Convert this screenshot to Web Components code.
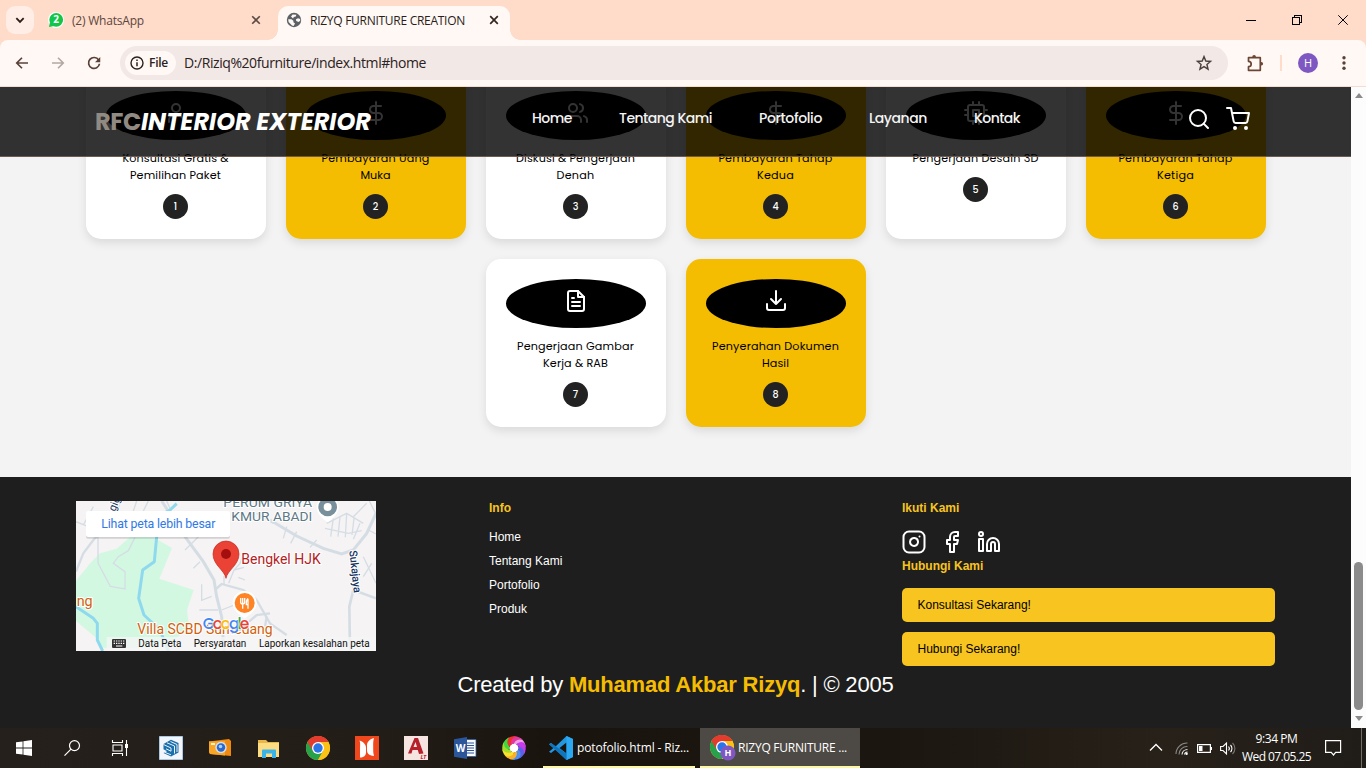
<!DOCTYPE html>
<html lang="id">
<head>
<meta charset="utf-8">
<title>RIZYQ FURNITURE CREATION</title>
<style>
html,body{margin:0;height:100%;overflow:hidden;background:#1e1e1e}
</style>
</head>
<body>
<desktop-screen></desktop-screen>
<script>
const fitted = [];

function component(name, html) {
  const tpl = document.createElement('template');
  tpl.innerHTML = html;
  customElements.define(name, class extends HTMLElement {
    constructor() {
      super();
      this.attachShadow({ mode: 'open' }).appendChild(tpl.content.cloneNode(true));
    }
  });
}

/* Text run whose tracking is tuned so that it takes a given width. */
customElements.define('fit-text', class extends HTMLElement {
  constructor() {
    super();
    this.attachShadow({ mode: 'open' }).innerHTML =
      '<style>:host{display:block;white-space:nowrap}span{display:inline-block;white-space:nowrap}</style><span><slot></slot></span>';
  }
  connectedCallback() { fitted.push(this); }
  fit() {
    const w = parseFloat(this.getAttribute('w'));
    const span = this.shadowRoot.querySelector('span');
    this.style.width = w + 'px';
    const n = this.textContent.length;
    span.style.letterSpacing = ((w - span.getBoundingClientRect().width) / n).toFixed(3) + 'px';
  }
});

const S = (body, extra = '') => `<svg viewBox="0 0 24 24" fill="none" stroke="currentColor" stroke-width="2" stroke-linecap="round" stroke-linejoin="round" ${extra}>${body}</svg>`;
const F = (body, box = '0 0 24 24') => `<svg viewBox="${box}" fill="none">${body}</svg>`;
const chrome = `<circle cx="12" cy="12" r="12" fill="#fbc116"/><path d="M12 12 1.6 6A12 12 0 0 1 22.4 6Z" fill="#e33b2e"/><path d="M12 12 1.6 6A12 12 0 0 0 12 24L17.2 15Z" fill="#27a24a"/><path d="M22.4 6H12V12L17.2 15 12 24A12 12 0 0 0 22.4 6Z" fill="#fbc116"/><path d="M1.6 6 6.8 15 12 12V6H22.4A12 12 0 0 0 1.6 6Z" fill="#e33b2e"/><circle cx="12" cy="12" r="6" fill="#fff"/><circle cx="12" cy="12" r="4.7" fill="#2b75e8"/>`;
const ICONS = {
  user: S('<path d="M19 21v-2a4 4 0 0 0-4-4H9a4 4 0 0 0-4 4v2"/><circle cx="12" cy="7" r="4"/>'),
  dollar: S('<path d="M12 1v22M17 5H9.5a3.5 3.5 0 0 0 0 7h5a3.5 3.5 0 0 1 0 7H6"/>'),
  users: S('<path d="M17 21v-2a4 4 0 0 0-4-4H5a4 4 0 0 0-4 4v2"/><circle cx="9" cy="7" r="4"/><path d="M23 21v-2a4 4 0 0 0-3-3.87M16 3.13a4 4 0 0 1 0 7.75"/>'),
  cpu: S('<rect x="4" y="4" width="16" height="16" rx="2"/><rect x="9" y="9" width="6" height="6"/><path d="M9 1v3M15 1v3M9 20v3M15 20v3M20 9h3M20 14h3M1 9h3M1 14h3"/>'),
  file: S('<path d="M14 2H6a2 2 0 0 0-2 2v16a2 2 0 0 0 2 2h12a2 2 0 0 0 2-2V8z"/><path d="M14 2v6h6M16 13H8M16 17H8M10 9H8"/>'),
  download: S('<path d="M21 15v4a2 2 0 0 1-2 2H5a2 2 0 0 1-2-2v-4M7 10l5 5 5-5M12 15V2"/>'),
  search: S('<circle cx="11" cy="11" r="8"/><path d="m21 21-4.35-4.35"/>'),
  cart: S('<circle cx="9" cy="21" r="1"/><circle cx="20" cy="21" r="1"/><path d="M1 1h4l2.68 13.39a2 2 0 0 0 2 1.61h9.72a2 2 0 0 0 2-1.61L23 6H6"/>'),
  instagram: S('<rect x="1.500" y="1.500" width="21" height="21" rx="5.500"/><path d="M16 11.37A4 4 0 1 1 12.63 8 4 4 0 0 1 16 11.37zM17.5 6.5h.01"/>'),
  facebook: S('<path d="M18 2h-3a5 5 0 0 0-5 5v3H7v4h3v8h4v-8h3l1-4h-4V7a1 1 0 0 1 1-1h3z"/>'),
  linkedin: S('<path d="M16 8a6 6 0 0 1 6 6v7h-4v-7a2 2 0 0 0-4 0v7h-4v-7a6 6 0 0 1 6-6z"/><rect x="2" y="9" width="4" height="12"/><circle cx="4" cy="4" r="2"/>'),
  chevron: F('<path d="m8 10 4 4 4-4" stroke="#2b1d18" stroke-width="2"/>'),
  whatsapp: F('<circle cx="8" cy="8" r="8" fill="#fff"/><circle cx="8.2" cy="7.8" r="6.9" fill="#12c64a"/><path d="m1 15 1-5 4 4z" fill="#12c64a"/><text x="8.2" y="11.4" text-anchor="middle" font-family="Open Sans" font-weight="700" font-size="10" fill="#fff">2</text>', '0 0 16 16'),
  close: F('<path d="m3.2 3.2 7.6 7.6m0-7.6-7.6 7.6" stroke="#5a4a44" stroke-width="1.6"/>', '0 0 14 14'),
  closeDark: F('<path d="m3.2 3.2 7.6 7.6m0-7.6-7.6 7.6" stroke="#33251f" stroke-width="1.7"/>', '0 0 14 14'),
  globe: F('<circle cx="8" cy="8" r="7.2" fill="#5b6165"/><path d="M2.2 7.2h3.2l2 1.6v1.5L9 11.6 7.6 14 6 13.5 2.6 10zM5 4.6l1.6-2.2 3.8.3-.6 1.7-1.9.5-.9 1.7zM10 7.3l2-1 2.2.6v1.9l-1.6 1.1-2.4-.8z" fill="#fff8f5"/>', '0 0 16 16'),
  min: F('<path d="M0 5.5h10" stroke="#000" shape-rendering="crispEdges"/>', '0 0 10 10'),
  restore: F('<path d="M.5 2.5h7v7h-7zM2.5 2.5v-2h7v7h-2" stroke="#000" shape-rendering="crispEdges"/>', '0 0 10 10'),
  winclose: F('<path d="m.3.3 9.4 9.4m0-9.4L.3 9.7" stroke="#000"/>', '0 0 10 10'),
  back: F('<path d="M20 12H5.5M12 5l-7 7 7 7" stroke="#594138" stroke-width="2.2"/>'),
  forward: F('<path d="M4 12h14.5M12 5l7 7-7 7" stroke="#b3a8a3" stroke-width="2.2"/>'),
  reload: F('<path d="M18.2 8A7.300 7.300 0 1 0 19.300 13" stroke="#594138" stroke-width="2.3"/><path d="M20.300 4v7H13.300z" fill="#594138"/>'),
  info: F('<circle cx="8" cy="8" r="6" stroke="#2b2220" stroke-width="1.4"/><path d="M8 7.2v4M8 4.4v1.5" stroke="#2b2220" stroke-width="1.5"/>', '0 0 16 16'),
  star: F('<path d="m12 3.5 2.4 5.9 6.3.5-4.8 4.1 1.5 6.2-5.4-3.3-5.4 3.3 1.5-6.2-4.8-4.1 6.3-.5z" stroke="#4d403b" stroke-width="1.9"/>'),
  puzzle: F('<path d="M2.500 3.700H14.300v12.600H2.500v-3.600a2.700 2.700 0 0 0 0-5.400z" stroke="#6b4535" stroke-width="1.700" stroke-linejoin="round"/><path d="M6.300 3.500V2.700a1.800 1.800 0 0 1 3.600 0v.8zM14.500 8h.8a1.800 1.800 0 0 1 0 3.600h-.8z" fill="#6b4535"/>', '0 0 18 18'),
  dots: F('<g fill="#5a4038"><circle cx="8" cy="2.8" r="1.7"/><circle cx="8" cy="8" r="1.7"/><circle cx="8" cy="13.2" r="1.7"/></g>', '0 0 16 16'),
  windows: F('<path fill="#fff" d="M0 2.3 6.6 1.4V7.6H0zM7.4 1.3 16 0v7.6H7.4zM0 8.4h6.6v6.2L0 13.7zM7.4 8.4H16V16l-8.6-1.3z"/>', '0 0 16 16'),
  tsearch: F('<circle cx="10.5" cy="5.6" r="5" stroke="#fff" stroke-width="1.2"/><path d="M7 9.2.5 15.7" stroke="#fff" stroke-width="1.2"/>', '0 0 16 16'),
  taskview: F('<path d="M.5 0v2.5h10V0M.5 16v-2.500h10V16M1 5h9v6H1zM14.500 0v16" stroke="#fff" stroke-width="1.1"/><path d="M13 4h3v4h-3z" fill="#fff"/>', '0 0 16 16'),
  sketchup: F('<path d="M.5.500h23v23H.500z" fill="#f2f5fa" stroke="#a8c8e4"/><path d="M4.500 8 12 3.800 19.500 7v9.500L12 20.500 4.500 17l3.500-1.800-3.500-2z" fill="#1a6fac"/><path d="M4.500 8.500 12 12v3.200l-5-2.400M8 6.800l7.500 3.200v7.500M11.500 5.500l6.500 3v7.500M5.500 16.200l6.500 2.600" stroke="#e9f3fa" stroke-width="1"/>'),
  camera: F('<path d="M1 5.500 21 3l2 2v15l-21-2-1-2z" fill="#ee8a10"/><path d="m1 5.500 16-.5v14.500L2 18l-1-2z" fill="#f9a526"/><rect x="3" y="7" width="4" height="2" fill="#fff3c8"/><circle cx="13" cy="11.500" r="5.700" fill="#d6dde6"/><circle cx="13" cy="11.500" r="4.200" fill="#2b68c9"/><circle cx="12.500" cy="10.500" r="1.800" fill="#a6d0ff"/>'),
  folder: F('<path d="M1 4h8l2 2h11v3H1z" fill="#e9b64a"/><path d="M1 7h21v14H1z" fill="#fbdc83"/><path d="M5 22v-7.500a1 1 0 0 1 1-1h12a1 1 0 0 1 1 1V22h-4v-4.500H9V22z" fill="#3ab3e8"/>'),
  chrome: F(chrome),
  chromeH: F(chrome + '<circle cx="18" cy="18" r="7.600" fill="#7e57c2"/><text x="18" y="21.300" text-anchor="middle" font-family="Open Sans" font-size="9" font-weight="700" fill="#fff">H</text>', '0 0 26 26'),
  nitro: F('<path d="M0 0h24v24H0z" fill="#f0471c"/><path d="M4.500 4.500C8 5.500 11 8 11 12v4.500c0 3-2.500 5-6 5V12c0-3 .5-5-.5-7.500z" fill="#fff"/><path d="M12 9.500c0-4 3-6.500 7-7.500-.8 2.500-.8 5-.8 8v3.500c0 3 .3 4.500.8 6.500-4-.5-7-2-7-5.500z" fill="#fff"/>'),
  autocad: F('<path d="M0 0h24v24H0z" fill="#f6e4e0"/><path d="M4 17.500 10.500 2h3.500l5.500 15.500-4.500.5-1.200-4H8.500L7.500 17.500zM9.500 11h3.500l-1.500-5z" fill="#b5202a"/><text x="16.500" y="22.500" font-family="Open Sans" font-size="5.500" font-weight="700" font-style="italic" fill="#c8202c">LT</text>'),
  word: F('<path d="M12 3.500h11v17H12z" fill="#f7f9fc" stroke="#2b579a" stroke-width=".8"/><path d="M14 7h7M14 9.500h7M14 12h7M14 14.500h7M14 17h7" stroke="#2b579a" stroke-width="1.200"/><path d="M1 3.200 14 1v22L1 20.800z" fill="#2b579a"/><text x="7.600" y="15.700" text-anchor="middle" font-family="Open Sans" font-size="10" font-weight="700" fill="#fff">W</text>'),
  swirl: F(['#f0a0ea', '#e0389c', '#f4302c', '#3fd83c', '#a5dc2c', '#f8e22e', '#fbb02a', '#4a8ff2', '#5d5fe6', '#c63cec'].map((c, i) => `<path transform="rotate(${-i * 36} 12 12)" d="M12 8C12 4 15.500.800 19 2.600A11.700 11.700 0 0 1 23.700 11C21 6.500 17 6.500 13 9z" fill="${c}"/>`).join('') + '<circle cx="12" cy="12" r="4.300" fill="#fff"/>'),
  vscode: F('<path d="M17.500 0 24 3v18l-6.500 3-11-10.500L2 17l-2-1.200 4.500-3.800L0 8.200 2 7l4.500 3.500zM17.500 6.500 10.500 12l7 5.500z" fill="#2396e0"/><path d="M17.500 0 24 3v18l-6.500 3z" fill="#2aa9f2"/><path d="M17.500 17.500 2 7 0 8.200 17.500 24z" fill="#0f76bd"/>'),
  up: F('<path d="m1 9.500 6-6 6 6" stroke="#fff" stroke-width="1.300"/>', '0 0 14 14'),
  wifi: F('<g fill="none"><path d="M1 12A11 11 0 0 1 12.500 1M4 12.500A8 8 0 0 1 12.500 4.500" stroke="#8a8784" stroke-width="1.100"/><path d="M7 12.500a5.500 5.500 0 0 1 5.500-5M9.500 12.500a3 3 0 0 1 3-2.500" stroke="#e8e8e8" stroke-width="1.200"/></g><circle cx="11.600" cy="11.800" r="1.200" fill="#fff"/>', '0 0 13 13'),
  battery: F('<path d="M.6.6h12.800v7.800H.6zM14.400 3v3" stroke="#fff" stroke-width="1.200"/><path d="M2 2h3.500v5H2z" fill="#fff"/>', '0 0 15 9'),
  sound: F('<path d="M.6 4.500H3L6.500 1v11L3 8.500H.6z" stroke="#fff" stroke-width="1.100"/><path d="M8.500 4.500a3 3 0 0 1 0 4M10.500 3a5 5 0 0 1 0 7" stroke="#fff" stroke-width="1.100"/><path d="M12.500 1a7.500 7.500 0 0 1 0 11" stroke="#777" stroke-width="1.100"/>', '0 0 16 13'),
  notice: F('<path d="M.6.6h15v11.800h-5L8.500 15l-2.300-2.600H.6z" stroke="#fff" stroke-width="1.200"/>', '0 0 16 16')
};

customElements.define('ui-icon', class extends HTMLElement {
  constructor() { super(); this.attachShadow({ mode: 'open' }); }
  connectedCallback() {
    const w = this.getAttribute('size') || 24, h = this.getAttribute('h') || w;
    this.shadowRoot.innerHTML = `<style>:host{display:block;flex:none;width:${w}px;height:${h}px}svg{display:block;width:100%;height:100%;overflow:visible}</style>${ICONS[this.getAttribute('name')]}`;
  }
});

component('browser-tabs', `<style>
:host{display:flex;align-items:flex-start;height:40px;background:#ffdbc9;box-sizing:border-box;padding:6px 0 0 6px;font:12px/28px "Open Sans",sans-serif;color:#5b463d}
.drop{width:28px;height:28px;border-radius:9px;background:#ffede6;display:flex;align-items:center;justify-content:center}
.tab{display:flex;align-items:center;height:28px;width:215px;margin-left:14px}
.tab fit-text{margin-left:8px}.tab .x{margin-left:auto}
.act{position:relative;box-sizing:border-box;height:34px;width:232px;margin-left:15px;padding:0 9px 6px 8px;border-radius:10px 10px 0 0;background:#fff8f5;color:#2b1d18}
.tab:not(.act) fit-text,.act fit-text{padding-top:1px}
.act:before,.act:after{content:"";position:absolute;bottom:0;width:10px;height:10px}
.act:before{left:-10px;background:radial-gradient(circle at 0 0,transparent 9.500px,#fff8f5 10px)}
.act:after{right:-10px;background:radial-gradient(circle at 100% 0,transparent 9.500px,#fff8f5 10px)}
.win{margin-left:auto;display:flex;gap:36px;padding:9px 18px 0 0}
</style><div class="drop"><ui-icon name="chevron" size="22"></ui-icon></div>
<div class="tab"><ui-icon name="whatsapp" size="16"></ui-icon><fit-text w="72">(2) WhatsApp</fit-text><ui-icon class="x" name="close" size="14"></ui-icon></div>
<div class="tab act"><ui-icon name="globe" size="16"></ui-icon><fit-text w="155">RIZYQ FURNITURE CREATION</fit-text><ui-icon class="x" name="closeDark" size="14"></ui-icon></div>
<div class="win"><ui-icon name="min" size="10"></ui-icon><ui-icon name="restore" size="10"></ui-icon><ui-icon name="winclose" size="10"></ui-icon></div>`);

component('browser-toolbar', `<style>
:host{display:block;height:47px;background:#ffdbc9}
.bar{display:flex;align-items:center;box-sizing:border-box;height:47px;padding:0 14px 1px 13px;background:#fff8f5;border-bottom:1px solid #f2ddd3;border-radius:8px 8px 0 0}
.nav{display:flex;gap:18px;width:107px}
.url{flex:1;display:flex;align-items:center;height:34px;border-radius:17px;background:#f2e8e6;box-sizing:border-box;padding:0 15px 0 5px;font:14px/20px "Open Sans",sans-serif;color:#2a2120}
.chip{display:flex;align-items:center;width:51px;height:24px;border-radius:12px;background:#fff8f5;box-sizing:border-box;padding-left:4px;gap:4px;font-size:12px;font-weight:600}
.url>fit-text{margin-left:8px}.star{margin-left:auto}
.end{display:flex;align-items:center}
.sep{width:2px;height:16px;background:#ffdbc9;margin:0 16px 0 16px}
.me{width:20px;height:20px;border-radius:50%;background:#7e57c2;color:#fff;font:11px/20px "Open Sans",sans-serif;text-align:center;margin-right:18px}
</style><div class="bar"><div class="nav"><ui-icon name="back" size="18"></ui-icon><ui-icon name="forward" size="18"></ui-icon><ui-icon name="reload" size="18"></ui-icon></div>
<div class="url"><div class="chip"><ui-icon name="info" size="16"></ui-icon><fit-text w="19">File</fit-text></div><fit-text w="242">D:/Riziq%20furniture/index.html#home</fit-text><ui-icon class="star" name="star" size="18"></ui-icon></div>
<div class="end"><ui-icon name="puzzle" size="18" style="margin-left:18px"></ui-icon><div class="sep"></div><div class="me">H</div><ui-icon name="dots" size="16"></ui-icon></div></div>`);

component('site-nav', `<style>
:host{position:absolute;left:0;right:0;top:0;display:flex;align-items:center;box-sizing:border-box;height:70px;padding:0 101px 0 95px;background:rgba(0,0,0,.8);border-bottom:1px solid #6d5a50;font-family:Poppins,"Inter",sans-serif;color:#fff}
.logo{display:flex;width:437px;font-size:24px;line-height:30px;font-weight:700}
.rfc{color:#918a82}.name{font-style:italic}
.links{display:flex;gap:47px;font-size:14px;font-weight:500;line-height:20px;margin-top:-8px;color:#f4f4f4}
.icons{display:flex;gap:15px;margin-left:auto;margin-top:-5px}
</style><div class="logo"><fit-text class="rfc" w="46">RFC</fit-text><fit-text class="name" w="230">INTERIOR EXTERIOR</fit-text></div>
<div class="links"><fit-text w="40">Home</fit-text><fit-text w="93">Tentang Kami</fit-text><fit-text w="63">Portofolio</fit-text><fit-text w="58">Layanan</fit-text><fit-text w="46">Kontak</fit-text></div>
<div class="icons"><ui-icon name="search"></ui-icon><ui-icon name="cart"></ui-icon></div>`);

customElements.define('step-card', class extends HTMLElement {
  constructor() { super(); this.attachShadow({ mode: 'open' }); }
  connectedCallback() {
    const lines = this.getAttribute('lines').split('|').map(l => {
      const [t, w] = l.split('@');
      return `<fit-text w="${w}">${t.replace('&', '&amp;')}</fit-text>`;
    }).join('');
    this.shadowRoot.innerHTML = `<style>
:host{display:flex;flex-direction:column;align-items:center;box-sizing:border-box;width:180px;height:168px;padding:20px;border-radius:15px;background:#fff;box-shadow:0 4px 10px rgba(0,0,0,.1);font:11.200px/17px Poppins,"Inter",sans-serif;color:#000}
:host([gold]){background:#f5bd02}
.icon{display:flex;justify-content:center;width:140px;height:49px;box-sizing:border-box;padding-top:10px;border-radius:50%;background:#000;color:#fff;margin-bottom:10px;flex:none}
.num{width:25px;height:25px;flex:none;border-radius:50%;background:#222;color:#fff;text-align:center;font-size:9.600px;font-weight:500;line-height:26px;margin-top:10px}
</style><div class="icon"><ui-icon name="${this.getAttribute('icon')}"></ui-icon></div>${lines}<div class="num">${this.getAttribute('n')}</div>`;
  }
});

component('step-grid', `<style>
:host{display:flex;flex-wrap:wrap;justify-content:center;align-content:flex-start;gap:20px;height:406px;margin-top:-16px;padding:0 70px;box-sizing:border-box}
</style>
<step-card icon="user" n="1" lines="Konsultasi Gratis &@106|Pemilihan Paket@91"></step-card>
<step-card gold icon="dollar" n="2" lines="Pembayaran Uang@108|Muka@30"></step-card>
<step-card icon="users" n="3" lines="Diskusi & Pengerjaan@119|Denah@38"></step-card>
<step-card gold icon="dollar" n="4" lines="Pembayaran Tahap@114|Kedua@37"></step-card>
<step-card icon="cpu" n="5" lines="Pengerjaan Desain 3D@126"></step-card>
<step-card gold icon="dollar" n="6" lines="Pembayaran Tahap@114|Ketiga@37"></step-card>
<step-card icon="file" n="7" lines="Pengerjaan Gambar@117|Kerja & RAB@65"></step-card>
<step-card gold icon="download" n="8" lines="Penyerahan Dokumen@127|Hasil@27"></step-card>`);

component('location-map', `<style>
:host{display:block;width:300px;height:150px}svg{display:block}
text{font-family:Roboto,sans-serif}
.halo{paint-order:stroke;stroke:#fff;stroke-width:6px;stroke-linejoin:round}
</style><svg width="300" height="150" viewBox="18 33 900 450">
<path d="M18 33h900v450H18z" fill="#f5f3f4"/>
<path d="M18 272 62 218 90 190l50-14 40-34h70l56 32-38 92 103 34-20 60 6 50-50 46-60 10-20 7H98l-20-30-60-50z" fill="#d3f8e2"/>
<g fill="none" stroke="#d5dde4">
<path d="M18 245 40 190 70 150 110 110 138 70 150 33" stroke-width="7"/>
<path d="M275 33 345 140 400 215 432 270 440 320 455 380 462 483" stroke-width="9"/>
<path d="M434 300 455 282 520 300 560 330M560 330 600 400 650 435" stroke-width="7"/>
<path d="M600 90 680 138 760 175 815 192 850 180 890 130 918 70" stroke-width="9"/>
<path d="M850 180 862 240 850 300 838 350 840 483M850 300l68 25" stroke-width="8"/>
<path d="M84 134v85l37 70 44 8v-52l-35-25 15-20 30-18 20-40M18 95l50 20 70-30M40 105 70 50" stroke-width="4"/>
<path d="M345 180 385 140M390 215l-20 20M395 283v48l30-12M388 360h56M455 360l50-20M476 280l16-40 18-20 10-25M492 240l30-8M505 262l20 8M462 283v-25M200 33l-20 60M235 33l-15 30M290 33l18 40M330 80l20 30" stroke-width="4"/>
<path d="M650 110 640 145M680 125l-18 35M740 150l-20 22M560 70l50 30M770 100l60-30 50 30M765 115l70 15 40-8M790 85l-8 55M810 80l-6 60M830 72l-4 70M852 85l-6 50M870 100l-20 48M898 33l20 40M895 120l23 12M880 200l38 80M905 220l-25 40M850 80l40-40" stroke-width="4"/>
<path d="M520 410 560 375 600 370M590 380l-5 30" stroke-width="7"/>
</g>
<path d="M320 41 300 60 262 80 260 140 253 215 218 240 206 325 222 375 270 420 295 483M18 350 70 385 82 400v50l16 33" fill="none" stroke="#8fd9ee" stroke-width="9" stroke-linejoin="round"/>
<text transform="translate(135 66) rotate(-68)" font-size="33" fill="#17345f" class="halo">gig</text>
<g class="halo" font-size="41" fill="#5d7886"><text x="460" y="52" textLength="266" lengthAdjust="spacingAndGlyphs">PERUM GRIYA</text><text x="484" y="93" textLength="243" lengthAdjust="spacingAndGlyphs">KMUR ABADI</text></g>
<path d="M773 97C755 84 740 70 740 51a33 33 0 0 1 66 0c0 19-15 33-33 46z" fill="#fff"/><circle cx="773" cy="51" r="28" fill="#78909c"/><circle cx="773" cy="51" r="12" fill="#fff"/>
<text transform="translate(838 182) rotate(84)" font-size="33" font-weight="500" fill="#17345f" class="halo" textLength="128">Sukajaya</text>
<text x="20" y="348" font-size="43" fill="#d0610b" class="halo" textLength="48" lengthAdjust="spacingAndGlyphs">ng</text>
<text x="202" y="432" font-size="43" fill="#d0610b" class="halo" textLength="406" lengthAdjust="spacingAndGlyphs">Villa SCBD Sumedang</text>
<path d="M524 386c-16-13-36-25-36-47a36 36 0 0 1 72 0c0 22-20 34-36 47z" fill="#fff"/><circle cx="524" cy="339" r="30" fill="#ff8426"/>
<path d="M512 324v12q0 6 6 6t6-6v-12M518 324v32M534 326v30M534 326q-6 4-5 18h5" fill="none" stroke="#fff" stroke-width="4"/>
<path d="M468 265c-4-24-39-40-39-73a39 39 0 0 1 78 0c0 33-35 49-39 73z" fill="#ea4335" stroke="#c5221f" stroke-width="2"/><circle cx="468" cy="192" r="15" fill="#a50e0e"/>
<text x="514" y="222" font-size="43" fill="#b3211d" class="halo" textLength="238" lengthAdjust="spacingAndGlyphs">Bengkel HJK</text>
<text x="398" y="417" font-size="46" font-weight="500" textLength="140" class="halo" style="font-family:Poppins,Lato,sans-serif" stroke-opacity=".8"><tspan fill="#4285f4">G</tspan><tspan fill="#ea4335">o</tspan><tspan fill="#fbbc04">o</tspan><tspan fill="#4285f4">g</tspan><tspan fill="#34a853">l</tspan><tspan fill="#ea4335">e</tspan></text>
<path d="M110 441h808v42H110z" fill="#f5f5f5" fill-opacity=".8"/>
<rect x="126" y="447" width="42" height="27" rx="3" fill="#333"/><path d="M131 453h33M131 460h33" stroke="#fff" stroke-width="3.500" stroke-dasharray="4 3"/><path d="M138 468h19" stroke="#fff" stroke-width="3"/>
<g font-size="30" fill="#111" lengthAdjust="spacingAndGlyphs"><text x="205" y="471" textLength="129" lengthAdjust="spacingAndGlyphs">Data Peta</text><text x="371" y="471" textLength="158" lengthAdjust="spacingAndGlyphs">Persyaratan</text><text x="567" y="471" textLength="332" lengthAdjust="spacingAndGlyphs">Laporkan kesalahan peta</text></g>
<rect x="48" y="66" width="432" height="80" rx="6" fill="#000" fill-opacity=".14"/><rect x="48" y="63" width="432" height="78" rx="6" fill="#fff"/>
<text x="94" y="114" font-size="37" fill="#3079e6" textLength="342">Lihat peta lebih besar</text>
</svg>`);

component('cta-button', `<style>
:host{display:block;box-sizing:border-box;height:34px;padding:0 15.500px;border-radius:5px;background:#f8c41f;color:#000;font:12px/34px "Liberation Sans",Arial,sans-serif}
</style><slot></slot>`);

component('site-footer', `<style>
:host{display:block;height:251px;box-sizing:border-box;padding:24px 76px 0;background:#1e1e1e;color:#fff;font:12px/14px "Liberation Sans",Arial,sans-serif}
.cols{display:grid;grid-template-columns:repeat(3,373px);gap:40px;height:171px}
h4{margin:0;font:bold 12px/14px "Liberation Sans",Arial,sans-serif;color:#f8c41f}
.list{display:flex;flex-direction:column;gap:10px;margin-top:15px}
.soc{display:flex;gap:13.500px;margin:15px 0 5px}
.cta{display:flex;flex-direction:column;gap:10px;margin-top:15px}
.made{display:flex;justify-content:center;font-size:22px;line-height:26px;white-space:pre}.made b{color:#f5bd02}
</style><div class="cols"><location-map></location-map>
<div><h4>Info</h4><div class="list"><span>Home</span><span>Tentang Kami</span><span>Portofolio</span><span>Produk</span></div></div>
<div><h4>Ikuti Kami</h4><div class="soc"><ui-icon name="instagram"></ui-icon><ui-icon name="facebook"></ui-icon><ui-icon name="linkedin"></ui-icon></div><h4>Hubungi Kami</h4>
<div class="cta"><cta-button>Konsultasi Sekarang!</cta-button><cta-button>Hubungi Sekarang!</cta-button></div></div></div>
<div class="made"><fit-text w="436">Created by <b style="color:#f5bd02">Muhamad Akbar Rizyq</b>. | © 2005</fit-text></div>`);

component('scroll-rail', `<style>
:host{display:flex;flex-direction:column;align-items:center;width:15px;box-sizing:border-box;background:#fcfcfc;padding:6px 0 7px}
i{border:4.500px solid transparent}.u{border-bottom:5px solid #8b8b8b;border-top:0}.d{border-top:5px solid #8b8b8b;border-bottom:0;margin-top:6px}
b{margin-top:auto;width:9px;height:148px;border-radius:5px;background:#8b8b8b}
</style><i class="u"></i><b></b><i class="d"></i>`);

component('task-bar', `<style>
:host{display:flex;height:40px;background:linear-gradient(90deg,#25201b,#231d18 28%,#1a140f 40%,#1c1611 65%,#272119 85%,#201c18);color:#fff;font:12px/16px "Open Sans",sans-serif}
.c{width:49px;display:flex;align-items:center;justify-content:center}.s{width:48px}
.w{display:flex;align-items:center;box-sizing:border-box;border-bottom:2px solid #fdf6a5;padding:2px 0 0 6px;height:40px}
.tray{margin-left:auto;display:flex;align-items:center}
.clock{display:flex;flex-direction:column;align-items:center;gap:2px}
.edge{width:1px;height:40px;background:#706d6a;margin-left:20px}
</style>
<div class="c s"><ui-icon name="windows" size="16"></ui-icon></div><div class="c s"><ui-icon name="tsearch" size="16"></ui-icon></div><div class="c s"><ui-icon name="taskview" size="16"></ui-icon></div>
<div class="c" style="margin-left:2px"><ui-icon name="sketchup"></ui-icon></div><div class="c"><ui-icon name="camera"></ui-icon></div><div class="c"><ui-icon name="folder"></ui-icon></div><div class="c"><ui-icon name="chrome"></ui-icon></div><div class="c"><ui-icon name="nitro"></ui-icon></div><div class="c"><ui-icon name="autocad"></ui-icon></div><div class="c"><ui-icon name="word"></ui-icon></div><div class="c"><ui-icon name="swirl"></ui-icon></div>
<div class="w" style="width:152px;margin-left:5px"><ui-icon name="vscode" size="24"></ui-icon><fit-text w="112" style="margin-left:4px">potofolio.html - Riz...</fit-text></div>
<div class="w" style="width:160px;margin-left:5px;background:#4d4944;padding-left:10px"><ui-icon name="chromeH" size="26"></ui-icon><fit-text w="109" style="margin-left:2px">RIZYQ FURNITURE ...</fit-text></div>
<div class="tray"><ui-icon name="up" size="14"></ui-icon><ui-icon name="wifi" size="13" style="margin-left:12px"></ui-icon><ui-icon name="battery" size="15" h="9" style="margin-left:9px"></ui-icon><ui-icon name="sound" size="16" h="13" style="margin-left:8px"></ui-icon>
<div class="clock" style="margin-left:6px"><fit-text w="42">9:34 PM</fit-text><fit-text w="69">Wed 07.05.25</fit-text></div><ui-icon name="notice" size="16" style="margin-left:14px"></ui-icon><div class="edge"></div></div>
<div style="width:4px"></div>`);

component('desktop-screen', `<style>
:host{display:flex;flex-direction:column;width:1366px;height:768px;overflow:hidden}
.view{display:flex;height:641px;overflow:hidden}
.page{position:relative;width:1351px;height:641px;overflow:hidden;background:#f3f3f3}
</style><browser-tabs></browser-tabs><browser-toolbar></browser-toolbar>
<div class="view"><div class="page"><step-grid></step-grid><site-footer></site-footer><site-nav></site-nav></div><scroll-rail></scroll-rail></div>
<task-bar></task-bar>`);

fitted.forEach(t => t.fit());
</script>
</body>
</html>
